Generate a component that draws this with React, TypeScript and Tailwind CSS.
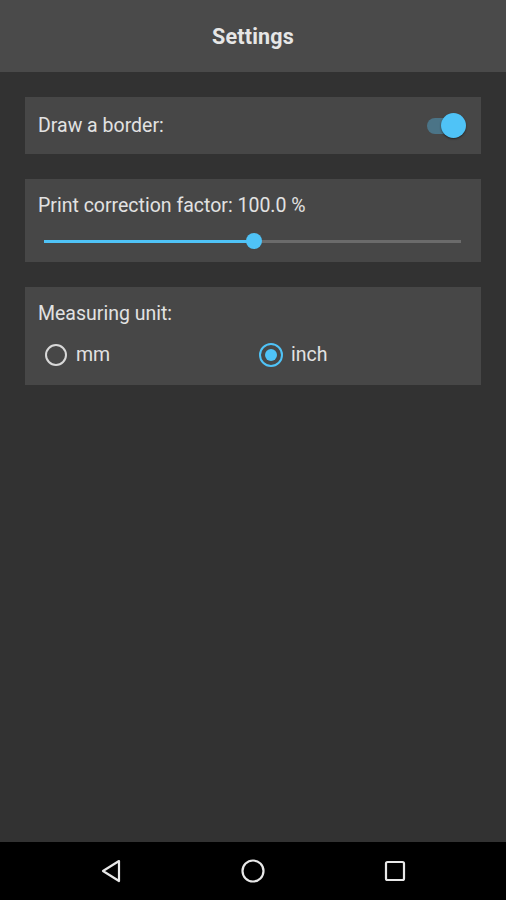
import React from "react";

export default function App() {
  return (
    <div
      className="w-[506px] h-[900px] flex flex-col bg-[#323232] overflow-hidden"
      style={{ fontFamily: "Roboto, 'Noto Sans', sans-serif" }}
    >
      <div className="h-[72px] bg-[#4a4a4a] flex items-center justify-center shrink-0 pt-[2px]">
        <span className="text-[21.5px] font-bold text-[#e6e6e6] tracking-[0.2px]">Settings</span>
      </div>
      <div className="flex-1 flex flex-col px-[25px] pt-[25px] gap-[25px]">
        <div className="h-[57px] bg-[#474747] flex items-center justify-between pl-[13px] pr-[16px]">
          <span className="text-[19.5px] text-[#e2e2e2]">Draw a border:</span>
          <div className="relative w-[40px] h-[26px] flex items-center">
            <div className="absolute left-[2px] right-[2px] h-[16px] rounded-full bg-[#4b7487]" />
            <div className="absolute right-[-1px] w-[25px] h-[25px] rounded-full bg-[#4fc3f7] shadow-[0_1px_2px_rgba(0,0,0,0.5)]" />
          </div>
        </div>
        <div className="h-[83px] bg-[#474747] flex flex-col pl-[13px] pr-[20px] pt-[16px]">
          <span className="text-[19.5px] text-[#e2e2e2] leading-[22px]">Print correction factor: 100.0 %</span>
          <div className="relative h-[16px] mt-[16px] ml-[6px] flex items-center">
            <div className="h-[3px] w-full bg-[#6b6b6b]" />
            <div className="absolute left-0 h-[3px] w-[210px] bg-[#4fc3f7]" />
            <div className="absolute left-[202px] w-[16px] h-[16px] rounded-full bg-[#4fc3f7]" />
          </div>
        </div>
        <div className="h-[98px] bg-[#474747] flex flex-col pl-[13px] pt-[16px]">
          <span className="text-[19.5px] text-[#e2e2e2] leading-[22px]">Measuring unit:</span>
          <div className="flex mt-[15px]">
            <div className="w-[221px] flex items-center gap-[9px] pl-[7px]">
              <div className="w-[22px] h-[22px] rounded-full border-[2.5px] border-[#d8d8d8]" />
              <span className="text-[19.5px] text-[#e2e2e2]">mm</span>
            </div>
            <div className="flex items-center gap-[8px]">
              <div className="w-[24px] h-[24px] rounded-full border-[2.5px] border-[#4fc3f7] flex items-center justify-center">
                <div className="w-[12px] h-[12px] rounded-full bg-[#4fc3f7]" />
              </div>
              <span className="text-[19.5px] text-[#e2e2e2]">inch</span>
            </div>
          </div>
        </div>
      </div>
      <div className="h-[58px] bg-black shrink-0 flex items-center justify-center gap-[0px]">
        <div className="w-[142px] flex justify-center">
          <svg width="24" height="26" viewBox="0 0 24 26">
            <path d="M20 3 L4 13 L20 23 Z" fill="none" stroke="#e8e8e8" strokeWidth="2.2" strokeLinejoin="round" />
          </svg>
        </div>
        <div className="w-[142px] flex justify-center">
          <svg width="26" height="26" viewBox="0 0 26 26">
            <circle cx="13" cy="13" r="10.5" fill="none" stroke="#e8e8e8" strokeWidth="2.2" />
          </svg>
        </div>
        <div className="w-[142px] flex justify-center">
          <svg width="24" height="24" viewBox="0 0 24 24">
            <rect x="3" y="3" width="18" height="18" rx="1.5" fill="none" stroke="#e8e8e8" strokeWidth="2.2" />
          </svg>
        </div>
      </div>
    </div>
  );
}
